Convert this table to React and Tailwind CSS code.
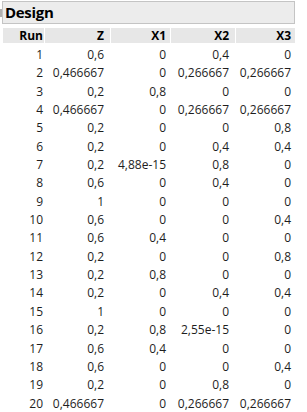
import React from 'react';

const rows = [
  [1, '0,6', '0', '0,4', '0'],
  [2, '0,466667', '0', '0,266667', '0,266667'],
  [3, '0,2', '0,8', '0', '0'],
  [4, '0,466667', '0', '0,266667', '0,266667'],
  [5, '0,2', '0', '0', '0,8'],
  [6, '0,2', '0', '0,4', '0,4'],
  [7, '0,2', '4,88e-15', '0,8', '0'],
  [8, '0,6', '0', '0,4', '0'],
  [9, '1', '0', '0', '0'],
  [10, '0,6', '0', '0', '0,4'],
  [11, '0,6', '0,4', '0', '0'],
  [12, '0,2', '0', '0', '0,8'],
  [13, '0,2', '0,8', '0', '0'],
  [14, '0,2', '0', '0,4', '0,4'],
  [15, '1', '0', '0', '0'],
  [16, '0,2', '0,8', '2,55e-15', '0'],
  [17, '0,6', '0,4', '0', '0'],
  [18, '0,6', '0', '0', '0,4'],
  [19, '0,2', '0', '0,8', '0'],
  [20, '0,466667', '0', '0,266667', '0,266667'],
];

const headers = ['Run', 'Z', 'X1', 'X2', 'X3'];
// right padding per column so numbers line up with the header labels
const pads = ['pr-[1px]', 'pr-[6px]', 'pr-[4px]', 'pr-[6px]', 'pr-[4px]'];
const cols = 'grid grid-cols-[41px_65px_59px_64px_59px] gap-x-[1px]';

function App() {
  return (
    <div className="w-[307px] h-[412px] bg-white overflow-hidden relative text-[#1e1e1e] font-['Open_Sans',sans-serif]">
      {/* small disclosure mark at the left edge */}
      <div className="absolute left-0 top-[9px] w-[2px] h-[8px] bg-[#b0b0b0]" />

      <div className="pt-[1px] pl-[2px]">
        <div className="w-[293px] h-[23px] bg-[#ececec] border border-[#c4c4c4] pl-[2px] flex items-center">
          <span className="text-[15px] font-bold leading-none tracking-[-0.3px] text-black">Design</span>
        </div>
      </div>

      <div className="pl-[3px] pt-[4px]">
        <div className={cols}>
          {headers.map((h, i) => (
            <div key={h} className={`h-[15px] bg-[#e7e7e7] text-right text-[12px] font-bold leading-[15px] text-black ${pads[i]}`}>
              {h}
            </div>
          ))}
        </div>

        <div className="pt-[3px]">
          {rows.map((r) => (
            <div key={r[0]} className={cols}>
              {r.map((v, i) => (
                <div key={i} className={`h-[18.35px] text-right text-[12px] leading-[18.35px] ${pads[i]}`}>
                  {v}
                </div>
              ))}
            </div>
          ))}
        </div>
      </div>
    </div>
  );
}

export default App;
